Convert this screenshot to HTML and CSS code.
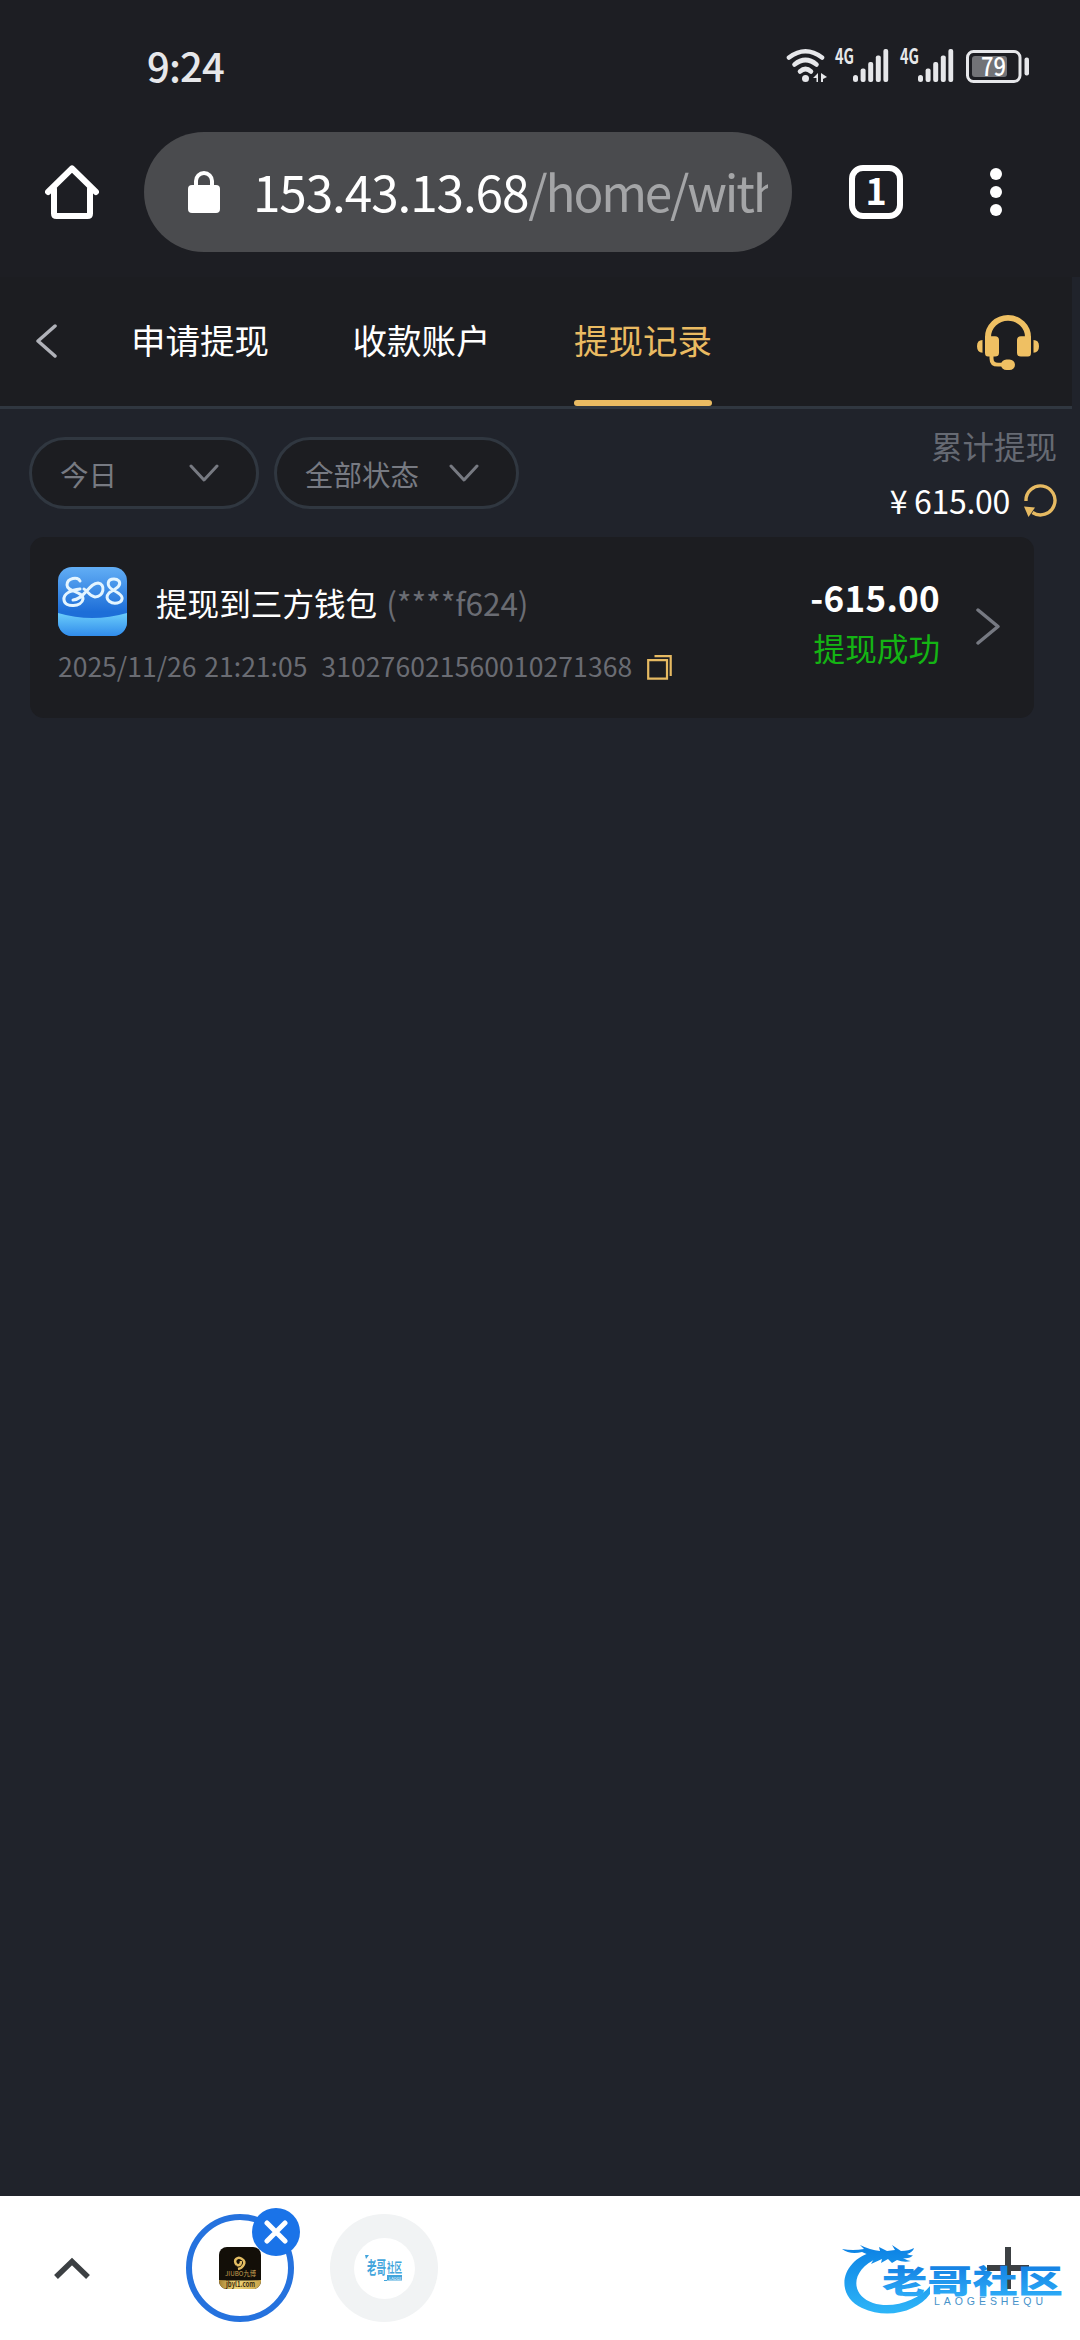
FILE: index.html
```html
<!DOCTYPE html>
<html lang="zh-CN">

<head>
    <meta charset="UTF-8">
    <meta name="viewport" content="width=device-width, initial-scale=1.0">
    <title>提现记录</title>
    <link rel="stylesheet" href="styles.css">
</head>

<body>
    <!-- Status bar -->
    <div class="status-bar">
        <span class="time">9:24</span>
        <svg class="status-icons" width="246" height="40" viewBox="0 0 246 40">
            <g fill="none" stroke="#e6e7ea" stroke-width="4.600" stroke-linecap="round">
                <path d="M3 9.500Q19.500 -3 36 9.500"/>
                <path d="M8.500 16.500Q19.500 7.500 30.500 16.500"/>
                <path d="M14 23.500Q19.500 18.500 25 23.500"/>
            </g>
            <g fill="#e6e7ea">
                <circle cx="19.500" cy="30.500" r="3.500"/>
                <path d="M32 25v9h-1.500v-4H27zM35 25l6 4-4 2v3h-2z"/>
                <text class="net" x="49" y="16" textLength="19" lengthAdjust="spacingAndGlyphs">4G</text>
                <text class="net" x="114" y="16" textLength="19" lengthAdjust="spacingAndGlyphs">4G</text>
                <g id="bars">
                    <rect x="67" y="27" width="5" height="7" rx="2.500"/>
                    <rect x="74.600" y="20.500" width="5" height="13.500" rx="2"/>
                    <rect x="82.200" y="14" width="5" height="20" rx="2"/>
                    <rect x="89.800" y="7.500" width="5" height="26.500" rx="2"/>
                    <rect x="97.400" y="1" width="4.800" height="33" rx="2"/>
                </g>
                <use href="#bars" x="65"/>
                <rect x="238.500" y="9.500" width="4.500" height="18" rx="2"/>
            </g>
            <rect x="181.500" y="3.500" width="52.500" height="30" rx="6" fill="none" stroke="#e6e7ea" stroke-width="3"/>
            <rect x="186" y="8" width="35" height="21" rx="3" fill="#727377"/>
            <text class="battery" x="195" y="28" textLength="25" lengthAdjust="spacingAndGlyphs">79</text>
        </svg>
    </div>

    <!-- Browser toolbar -->
    <div class="toolbar">
        <svg class="home" width="54" height="54" viewBox="0 0 54 54" fill="none" stroke="#fff" stroke-width="6" stroke-linecap="round" stroke-linejoin="round">
            <path d="M3 27L27 3.500L51 27"/>
            <path d="M9 24V48.500Q9 51 11.500 51H42.500Q45 51 45 48.500V24"/>
        </svg>
        <div class="url-box">
            <svg width="32" height="42" viewBox="0 0 32 42">
                <rect y="14" width="32" height="28" rx="4" fill="#fff"/>
                <path d="M8 16V10a8 8 0 0 1 16 0V16" fill="none" stroke="#fff" stroke-width="4"/>
            </svg>
            <div class="url"><span class="host">153.43.13.68</span><span class="path">/home/withdraw</span></div>
        </div>
        <div class="tab-count">1</div>
        <div class="menu"><i></i><i></i><i></i></div>
    </div>

    <!-- Page header -->
    <div class="header">
        <svg class="back" width="22" height="34" viewBox="0 0 22 34" fill="none" stroke="#b0b2b9" stroke-width="3.500" stroke-linecap="round" stroke-linejoin="round">
            <path d="M19 2L2 17L19 32"/>
        </svg>
        <div class="tabs">
            <div class="tab">申请提现</div>
            <div class="tab">收款账户</div>
            <div class="tab active">提现记录</div>
        </div>
        <svg class="service" width="62" height="55" viewBox="0 0 62 57" preserveAspectRatio="none">
            <path d="M11 27V23a20 20 0 0 1 40 0V27" fill="none" stroke="#efc063" stroke-width="6"/>
            <path d="M14.500 41V45Q14.500 51.500 21 51.500H29" fill="none" stroke="#efc063" stroke-width="4"/>
            <g fill="#efc063">
                <path d="M8 22h10q4 0 4 4v13q0 4-4 4H11q-3 0-3-4zM54 22H44q-4 0-4 4v13q0 4 4 4h7q3 0 3-4z"/>
                <path d="M5.500 26v13Q0 39 0 32.500T5.500 26zM56.500 26v13q5.500 0 5.500-6.500t-5.500-6.500z"/>
                <rect x="24" y="46" width="14" height="11" rx="5.500"/>
            </g>
        </svg>
    </div>

    <!-- Filters and total -->
    <div class="filters">
        <div class="select day">今日
            <svg width="30" height="18" viewBox="0 0 30 18"><path d="M2 2L15 16L28 2"/></svg>
        </div>
        <div class="select state">全部状态
            <svg width="30" height="18" viewBox="0 0 30 18"><path d="M2 2L15 16L28 2"/></svg>
        </div>
        <div class="total">
            <div class="total-label">累计提现</div>
            <div class="total-value"><span class="yen">¥</span><span>615.00</span>
                <svg width="33" height="33" viewBox="0 0 33 33">
                    <path d="M2 17A14.500 14.500 0 1 1 8.500 28.500" fill="none" stroke="#e6ba62" stroke-width="3.400"/>
                    <path d="M0 22.500L11 23.500L4.500 33z" fill="#e6ba62"/>
                </svg>
            </div>
        </div>
    </div>

    <!-- Record -->
    <div class="record">
        <div class="info">
            <div class="title">
                <svg class="wallet" width="69" height="69" viewBox="0 0 69 69">
                    <defs>
                        <linearGradient id="sky" x1="0" y1="0" x2="0" y2="1">
                            <stop offset="0" stop-color="#62aef5"/>
                            <stop offset=".65" stop-color="#1d6ed8"/>
                        </linearGradient>
                        <linearGradient id="sea" x1="0" y1="0" x2="0" y2="1">
                            <stop offset="0" stop-color="#6bcdfb"/>
                            <stop offset="1" stop-color="#318ceb"/>
                        </linearGradient>
                    </defs>
                    <rect width="69" height="69" rx="14" fill="url(#sky)"/>
                    <path d="M0 46Q34 56 69 46V55a14 14 0 0 1-14 14H14A14 14 0 0 1 0 55z" fill="url(#sea)"/>
                    <g fill="none" stroke="#e4f5ff" stroke-width="3" stroke-linecap="round">
                        <path d="M22 14C20 9 9 11 9 18C9 25 25 24 25 32C24 40 7 41 6 33C5 26 14 23 22 22"/>
                        <path d="M15 33C26 33 31 16 40 16C48 17 46 30 37 30C31 29 30 24 26 22"/>
                        <path d="M56 12C49 12 48 19 55 23C63 27 67 31 62 35C54 39 45 32 51 26C57 22 64 19 61 14Q59 12 56 12z"/>
                    </g>
                </svg>
                <span class="name">提现到三方钱包</span>
                <span class="account">(****f624)</span>
            </div>
            <div class="meta">
                <span class="date">2025/11/26 21:21:05</span>
                <span class="order">310276021560010271368</span>
                <svg width="25" height="25" viewBox="0 0 25 25" fill="none" stroke="#e6ba62" stroke-width="2.200">
                    <path d="M1.200 5.200H20V23.600H1.200zM7.500 1.200H23.700V21"/>
                </svg>
            </div>
        </div>
        <div class="result">
            <div class="amount">-615.00</div>
            <div class="success">提现成功</div>
        </div>
        <svg class="arrow" width="24" height="37" viewBox="0 0 24 37" fill="none" stroke="#767982" stroke-width="3.500" stroke-linecap="round" stroke-linejoin="round">
            <path d="M2 2L22 18.500L2 35"/>
        </svg>
    </div>

    <!-- Tab strip -->
    <div class="bottom-bar">
        <svg class="expand" width="36" height="23" viewBox="0 0 36 23" fill="none" stroke="#3c4043" stroke-width="5.500">
            <path d="M2 20L18 4.500L34 20"/>
        </svg>
        <div class="site current">
            <svg width="42" height="42" viewBox="0 0 42 42">
                <defs>
                    <clipPath id="tile"><rect width="42" height="42" rx="8"/></clipPath>
                    <linearGradient id="gold" x1="0" x2="1">
                        <stop offset="0" stop-color="#a58131"/>
                        <stop offset=".4" stop-color="#f1d77b"/>
                        <stop offset="1" stop-color="#c9a448"/>
                    </linearGradient>
                </defs>
                <g clip-path="url(#tile)">
                    <rect width="42" height="42" fill="#130f08"/>
                    <path d="M0 33Q21 34 42 33V42H0z" fill="url(#gold)"/>
                </g>
                <path d="M18 18C13 13 19 9 23 12C28 15 24 21 19 22M18 18Q22 19 22 14" fill="none" stroke="#e3bd63" stroke-width="2.500"/>
                <text class="brand" x="6" y="29" textLength="31" lengthAdjust="spacingAndGlyphs">JIUBO九博</text>
                <text class="domain" x="7" y="40" textLength="29" lengthAdjust="spacingAndGlyphs">jbyl1.com</text>
            </svg>
            <div class="close">
                <svg width="24" height="24" viewBox="0 0 24 24" stroke="#fff" stroke-width="5" stroke-linecap="round"><path d="M3 3L21 21M21 3L3 21"/></svg>
            </div>
        </div>
        <div class="site other">
            <div class="favicon">
                <svg width="38" height="28" viewBox="0 0 38 28" fill="#42a5dc">
                    <path d="M0 1h4L1 5zM19 26h3v1h-3z"/>
                    <text class="fav-big" x="2" y="20" textLength="19" lengthAdjust="spacingAndGlyphs">老哥</text>
                    <text class="fav-small" x="22" y="18" textLength="15" lengthAdjust="spacingAndGlyphs">社区</text>
                    <rect x="22" y="21" width="15" height="5.500"/>
                    <text class="fav-tag" x="24" y="25.500">LAOGE</text>
                </svg>
            </div>
        </div>
        <svg class="plus" width="42" height="42" viewBox="0 0 42 42" fill="#3c4043"><path d="M18 0h6v18h18v6H24v18h-6V24H0v-6h18z"/></svg>
        <!-- Community watermark -->
        <svg class="watermark" width="222" height="74" viewBox="0 0 222 74">
            <defs>
                <linearGradient id="blue" gradientUnits="userSpaceOnUse" x1="0" y1="0" x2="0" y2="70">
                    <stop offset="0" stop-color="#0a7fe3"/>
                    <stop offset="1" stop-color="#2eb5f8"/>
                </linearGradient>
                <linearGradient id="word" gradientUnits="userSpaceOnUse" x1="0" y1="24" x2="0" y2="52">
                    <stop offset="0" stop-color="#1683e4"/>
                    <stop offset="1" stop-color="#2ba9f6"/>
                </linearGradient>
            </defs>
            <g fill="url(#blue)">
                <path d="M34 8C-2 16-8 52 20 65C46 77 76 68 88 51V43C76 58 50 66 31 60C8 52 8 27 36 15z"/>
                <path d="M0 6Q11 8 22 6L18 2Q28 7 38 8L37 4L45 8L53 7L50 2L59 8Q67 8 72 5Q71 9 65 11Q69 13 71 12Q68 16 61 15Q66 18 69 18Q62 20 55 17L50 20L46 16L39 20L40 16L29 21L33 14Q26 12 20 9Q8 12 0 6z"/>
            </g>
            <text class="word" x="40" y="50" textLength="181" lengthAdjust="spacingAndGlyphs" fill="url(#word)">老哥社区</text>
            <text class="latin" x="92" y="62" textLength="109">LAOGESHEQU</text>
        </svg>
    </div>
</body>

</html>
```

FILE: styles.css
```css
* {
    box-sizing: border-box;
}

body {
    margin: 0;
    height: 2340px;
    display: flex;
    flex-direction: column;
    overflow: hidden;
    background-color: #20232b;
    font-family: 'Noto Sans CJK SC', sans-serif;
    color: white;
}

svg {
    display: block;
    flex-shrink: 0;
}

.status-bar {
    height: 132px;
    padding: 45px 48px 0 147px;
    display: flex;
    justify-content: space-between;
    background-color: #1d1e23;
}

.status-icons {
    margin-top: 3px;
}

.time {
    color: #e6e7ea;
    font-size: 40px;
    line-height: 40px;
    font-weight: 500;
    letter-spacing: -0.8px;
}

.net {
    font-size: 21px;
    font-weight: bold;
}

.battery {
    font-size: 25px;
    font-weight: 500;
    fill: white;
}

.toolbar {
    height: 145px;
    padding: 0 78px 25px 45px;
    display: flex;
    align-items: center;
    background-color: #1d1e23;
}

.url-box {
    width: 648px;
    height: 120px;
    margin-left: 45px;
    padding: 0 24px 0 44px;
    display: flex;
    align-items: center;
    border-radius: 60px;
    background-color: #4a4b4e;
}

.url {
    flex: 1;
    margin-left: 33px;
    padding-bottom: 2px;
    overflow: hidden;
    white-space: nowrap;
    font-size: 49.500px;
    line-height: 74px;
}

.host {
    letter-spacing: -1.1px;
}

.path {
    color: #a4a5a7;
    letter-spacing: -2.2px;
}

.tab-count {
    width: 54px;
    height: 54px;
    margin-left: 57px;
    border: 6px solid white;
    border-radius: 14px;
    font-size: 36px;
    line-height: 37px;
    font-weight: bold;
    text-align: center;
}

.menu {
    margin-left: 87px;
    display: flex;
    flex-direction: column;
    gap: 6px;
}

.menu i {
    width: 12px;
    height: 12px;
    border-radius: 50%;
    background-color: white;
}

.header {
    width: 1072px;
    height: 132px;
    padding: 0 33px 0 36px;
    display: flex;
    border-bottom: 3px solid #303740;
    background-color: #1c1d21;
}

.back {
    margin-top: 47px;
}

.tabs {
    margin-left: 73px;
    display: flex;
    gap: 83.500px;
}

.tab {
    font-size: 34.500px;
    line-height: 124px;
}

.tab.active {
    color: #eabb62;
}

.tab.active::after {
    content: '';
    display: block;
    height: 6px;
    margin-top: -1px;
    border-radius: 3px;
    background-color: #eabb62;
}

.service {
    margin: 38px 0 0 auto;
}

.filters {
    height: 128px;
    padding: 28px 23px 0 29px;
    display: flex;
    gap: 15px;
}

.select {
    height: 72px;
    padding: 0 37px 0 28px;
    display: flex;
    align-items: center;
    justify-content: space-between;
    border: 3px solid #303740;
    border-radius: 36px;
    background-color: #1c1d21;
    color: #777a82;
    font-size: 28.500px;
}

.select.day {
    width: 230px;
}

.select.state {
    width: 245px;
}

.select path {
    fill: none;
    stroke: #777a82;
    stroke-width: 3;
    stroke-linecap: round;
    stroke-linejoin: round;
}

.total {
    margin: -17px 0 0 auto;
}

.total-label {
    color: #666a73;
    font-size: 31.500px;
    line-height: 50px;
    text-align: right;
}

.total-value {
    height: 60px;
    display: flex;
    align-items: center;
    font-size: 32px;
    letter-spacing: -0.3px;
}

.yen {
    margin-right: 7px;
}

.total-value svg {
    margin-left: 14px;
}

.record {
    width: 1004px;
    height: 181px;
    margin-left: 30px;
    padding: 0 34px 0 28px;
    display: flex;
    border-radius: 14px;
    background-color: #1c1d21;
}

.title {
    margin-top: 30px;
    display: flex;
    align-items: center;
    font-size: 31.600px;
}

.name {
    margin-left: 29px;
}

.account {
    margin-left: 9px;
    color: #6a6c73;
    letter-spacing: -0.1px;
}

.meta {
    height: 40px;
    margin-top: 9px;
    display: flex;
    align-items: center;
    color: #6a6c73;
    font-size: 26.500px;
    white-space: nowrap;
}

.date {
    word-spacing: 2px;
}

.order {
    margin-left: 14px;
    letter-spacing: 0.1px;
}

.meta svg {
    margin: 4px 0 0 15px;
}

.result {
    margin: 37px 0 0 auto;
    text-align: right;
}

.amount {
    font-size: 35px;
    line-height: 46px;
    font-weight: bold;
    letter-spacing: 0.3px;
}

.success {
    color: #14b414;
    font-size: 31.600px;
    line-height: 54px;
}

.arrow {
    margin: 71px 0 0 36px;
}

.bottom-bar {
    position: relative;
    height: 144px;
    margin-top: auto;
    padding: 0 51px 0 54px;
    display: flex;
    align-items: center;
    background-color: white;
}

.site {
    position: relative;
    width: 108px;
    height: 108px;
    display: flex;
    align-items: center;
    justify-content: center;
    border-radius: 50%;
}

.site.current {
    margin-left: 96px;
    border: 6px solid #2572de;
}

.site.other {
    margin-left: 36px;
    background-color: #f1f3f4;
}

.close {
    position: absolute;
    top: -12px;
    right: -12px;
    width: 48px;
    height: 48px;
    display: flex;
    align-items: center;
    justify-content: center;
    border-radius: 50%;
    background-color: #1a73e8;
}

.favicon {
    width: 61px;
    height: 61px;
    display: flex;
    align-items: center;
    justify-content: center;
    border-radius: 50%;
    background-color: white;
}

.brand {
    font-size: 6.500px;
    fill: #c6a052;
}

.domain {
    font-size: 8px;
    font-weight: bold;
    fill: #3f2f10;
}

.fav-big {
    font-size: 17px;
    font-weight: bold;
}

.fav-small {
    font-size: 13px;
    font-weight: bold;
}

.fav-tag {
    font-size: 4px;
    fill: white;
}

.plus {
    margin-left: auto;
}

.watermark {
    position: absolute;
    left: 842px;
    top: 47px;
}

.word {
    font-size: 32px;
    font-weight: 900;
}

.latin {
    font-family: 'Liberation Sans', sans-serif;
    font-size: 10.500px;
    fill: #4792c9;
}
```
